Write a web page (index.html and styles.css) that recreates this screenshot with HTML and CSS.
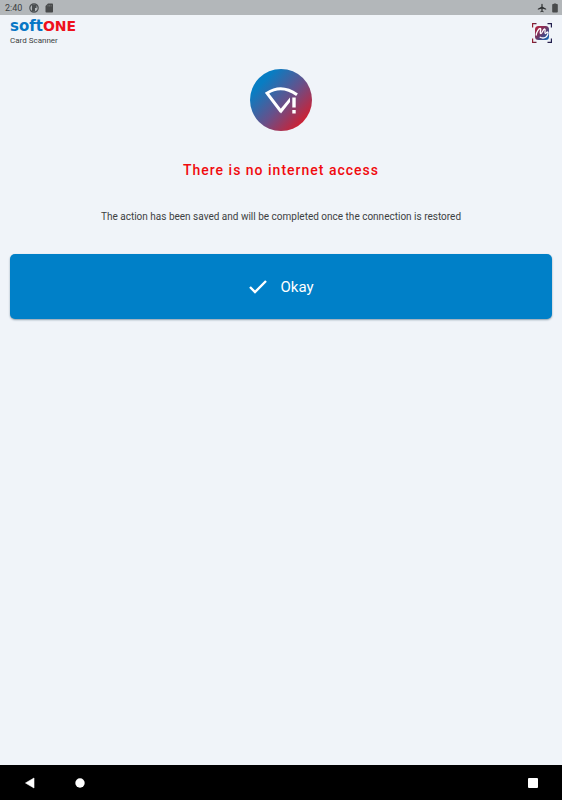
FILE: index.html
```html
<!DOCTYPE html>
<html lang="en">
<head>
<meta charset="utf-8">
<meta name="viewport" content="width=device-width, initial-scale=1">
<title>Card Scanner</title>
<link rel="stylesheet" href="styles.css">
</head>
<body>
<div class="status-bar">
  <span class="clock">2:40</span>
  <svg class="status-icon" viewBox="0 0 10 10" aria-hidden="true"><circle cx="5" cy="5" r="4.200" fill="none" stroke="#4a4e50" stroke-width="1.200"/><path d="M3 1.500h4.500V5H6v3.500H3z" fill="#4a4e50"/></svg>
  <svg class="status-icon" viewBox="0 0 10 10" aria-hidden="true"><path d="M4 .5h4.2q.8 0 .8.8v7.4q0 .8-.8.8H2.3q-.8 0-.8-.8V3z" fill="#484a4b"/><path d="M4 2v1.500M5.600 2v1.500M7.200 2v1.500" stroke="#85898b" stroke-width=".6"/></svg>
  <span class="spacer"></span>
  <svg class="status-icon" viewBox="0 0 24 24" aria-hidden="true"><path d="M22 16v-2l-8.500-5V3.500a1.500 1.500 0 0 0-3 0V9L2 14v2l8.500-2.500V19L8 20.500V22l4-1 4 1v-1.500L13.500 19v-5.500z" fill="#303334"/></svg>
  <svg class="status-icon battery" viewBox="0 0 6 10" aria-hidden="true"><path d="M1.800 1V.5h2.400V1H5q.8 0 .8.800v7q0 .7-.8.700H1q-.8 0-.8-.7v-7Q.2 1 1 1z" fill="#484a4b"/></svg>
</div>
<header class="app-bar">
  <div class="brand">
    <div class="wordmark"><span class="soft">soft</span><span class="one">ONE</span></div>
    <div class="product">Card Scanner</div>
  </div>
  <svg class="scan-logo" viewBox="0 0 20 20" role="img" aria-label="Scanner">
    <defs>
      <linearGradient id="scan" x1="0" y1="0" x2="1" y2="1"><stop offset="0" stop-color="#c01f39"/><stop offset=".45" stop-color="#743461"/><stop offset="1" stop-color="#006bbb"/></linearGradient>
      <linearGradient id="frame" gradientUnits="userSpaceOnUse" x1="0" y1="0" x2="20" y2="0"><stop offset="0" stop-color="#981f2f"/><stop offset=".3" stop-color="#4b2349"/><stop offset="1" stop-color="#20204f"/></linearGradient>
    </defs>
    <path d="M.6 4.500V.6h3.900M15.500.6h3.900v3.900M.6 15.500v3.900h3.900M15.500 19.400h3.900v-3.900" fill="none" stroke="url(#frame)" stroke-width="1.200"/>
    <rect x="3" y="3" width="14" height="14" rx="3.500" fill="url(#scan)"/>
    <path d="M4.200 12C4.500 9 6.800 5.300 8.200 5.500c1.600.3-1 4.700.6 5C10.400 10.800 11 5.700 12.700 6c1.400.3-.7 4.200.6 4.500 1 .2 1.700-2 2.400-1.500.9.800-.3 4.600-2.500 5.500-1.700.7-3.700.5-5-.2" fill="none" stroke="#fff" stroke-width="1.300" stroke-linecap="round"/>
  </svg>
</header>
<main class="content">
  <svg class="offline" viewBox="0 0 62 62" role="img" aria-label="No connection">
    <defs><linearGradient id="disc" x1=".12" y1=".15" x2=".88" y2=".88"><stop offset=".1" stop-color="#087dc3"/><stop offset=".55" stop-color="#67508a"/><stop offset="1" stop-color="#d51d2d"/></linearGradient></defs>
    <circle cx="31" cy="31" r="31" fill="url(#disc)"/>
    <path d="M47 25.800Q31.500 14.500 17 24.200L31 42.500" fill="none" stroke="#fff" stroke-width="3"/>
    <path d="M30.500 40l9.500-11.500V33l-9 11.500-1.500-2z" fill="#fff"/>
    <path d="M42.300 28.500h3.400v10h-3.400zM42.300 41h3.400v3.400h-3.400z" fill="#fff"/>
  </svg>
  <h1 class="title">There is no internet access</h1>
  <p class="message">The action has been saved and will be completed once the connection is restored</p>
  <button class="okay" type="button">
    <svg class="check" viewBox="0 0 20 20" aria-hidden="true"><path d="M2 10l5 5L18 4" fill="none" stroke="#fff" stroke-width="2.400"/></svg>
    <span>Okay</span>
  </button>
</main>
<nav class="nav-bar" aria-label="System">
  <button class="nav-button" type="button" aria-label="Back"><svg viewBox="0 0 12 12"><path d="M1.500 6L10 1v10z" fill="#fff" stroke="#fff" stroke-width=".6" stroke-linejoin="round"/></svg></button>
  <button class="nav-button" type="button" aria-label="Home"><svg viewBox="0 0 12 12"><circle cx="6" cy="6" r="4.700" fill="#fff"/></svg></button>
  <span class="spacer"></span>
  <button class="nav-button" type="button" aria-label="Recent apps"><svg viewBox="0 0 12 12"><rect x="1" y="1" width="10" height="10" rx="1" fill="#fff"/></svg></button>
</nav>
</body>
</html>
```
FILE: styles.css
```css
* { box-sizing: border-box; }
body {
  margin: 0;
  min-height: 100vh;
  display: flex;
  flex-direction: column;
  background: #f0f4f9;
  color: #3c3f42;
  font-family: Roboto, "Liberation Sans", sans-serif;
}
svg { display: block; }
.spacer { flex: 1; }
.status-bar {
  display: flex;
  align-items: center;
  gap: 5px;
  height: 15px;
  padding: 0 4px 0 5px;
  background: #b3b7ba;
  font-size: 9px;
  line-height: 16px;
}
.clock { margin-right: 2px; }
.status-icon { width: 10px; height: 10px; }
.battery { width: 6px; }
.app-bar {
  display: flex;
  align-items: center;
  justify-content: space-between;
  height: 35px;
  padding: 0 10px;
}
.wordmark {
  display: flex;
  align-items: baseline;
  font-family: "DejaVu Sans", sans-serif;
  font-weight: bold;
  line-height: 14px;
}
.soft { color: #0876c5; font-size: 15px; }
.one { color: #ee101b; font-size: 14px; }
.product { margin-top: 3px; font-size: 8px; line-height: 10px; }
.scan-logo { width: 20px; height: 20px; }
.content {
  flex: 1;
  display: flex;
  flex-direction: column;
  align-items: center;
  padding: 19px 10px;
}
.offline { width: 62px; height: 62px; }
.title {
  margin: 29px 0 0;
  color: #f00b0f;
  font-size: 14px;
  font-weight: 500;
  letter-spacing: 1px;
  line-height: 20px;
  text-align: center;
}
.message { margin: 29px 0 0; font-size: 10px; line-height: 16px; text-align: center; }
.okay {
  display: flex;
  align-items: center;
  justify-content: center;
  gap: 12px;
  width: 100%;
  height: 65px;
  margin-top: 29px;
  padding: 0;
  border: 0;
  border-radius: 5px;
  background: #0080c8;
  box-shadow: 0 1px 2px #8b9dab;
  color: #fff;
  font: 400 15px Roboto, sans-serif;
}
.check { width: 20px; height: 20px; }
.nav-bar { display: flex; align-items: center; height: 35px; padding: 0 12px; background: #000; }
.nav-button { width: 35px; height: 35px; padding: 0; border: 0; background: none; }
.nav-button + .nav-button { margin-left: 15px; }
.nav-button svg { width: 12px; height: 12px; margin: auto; }
```
